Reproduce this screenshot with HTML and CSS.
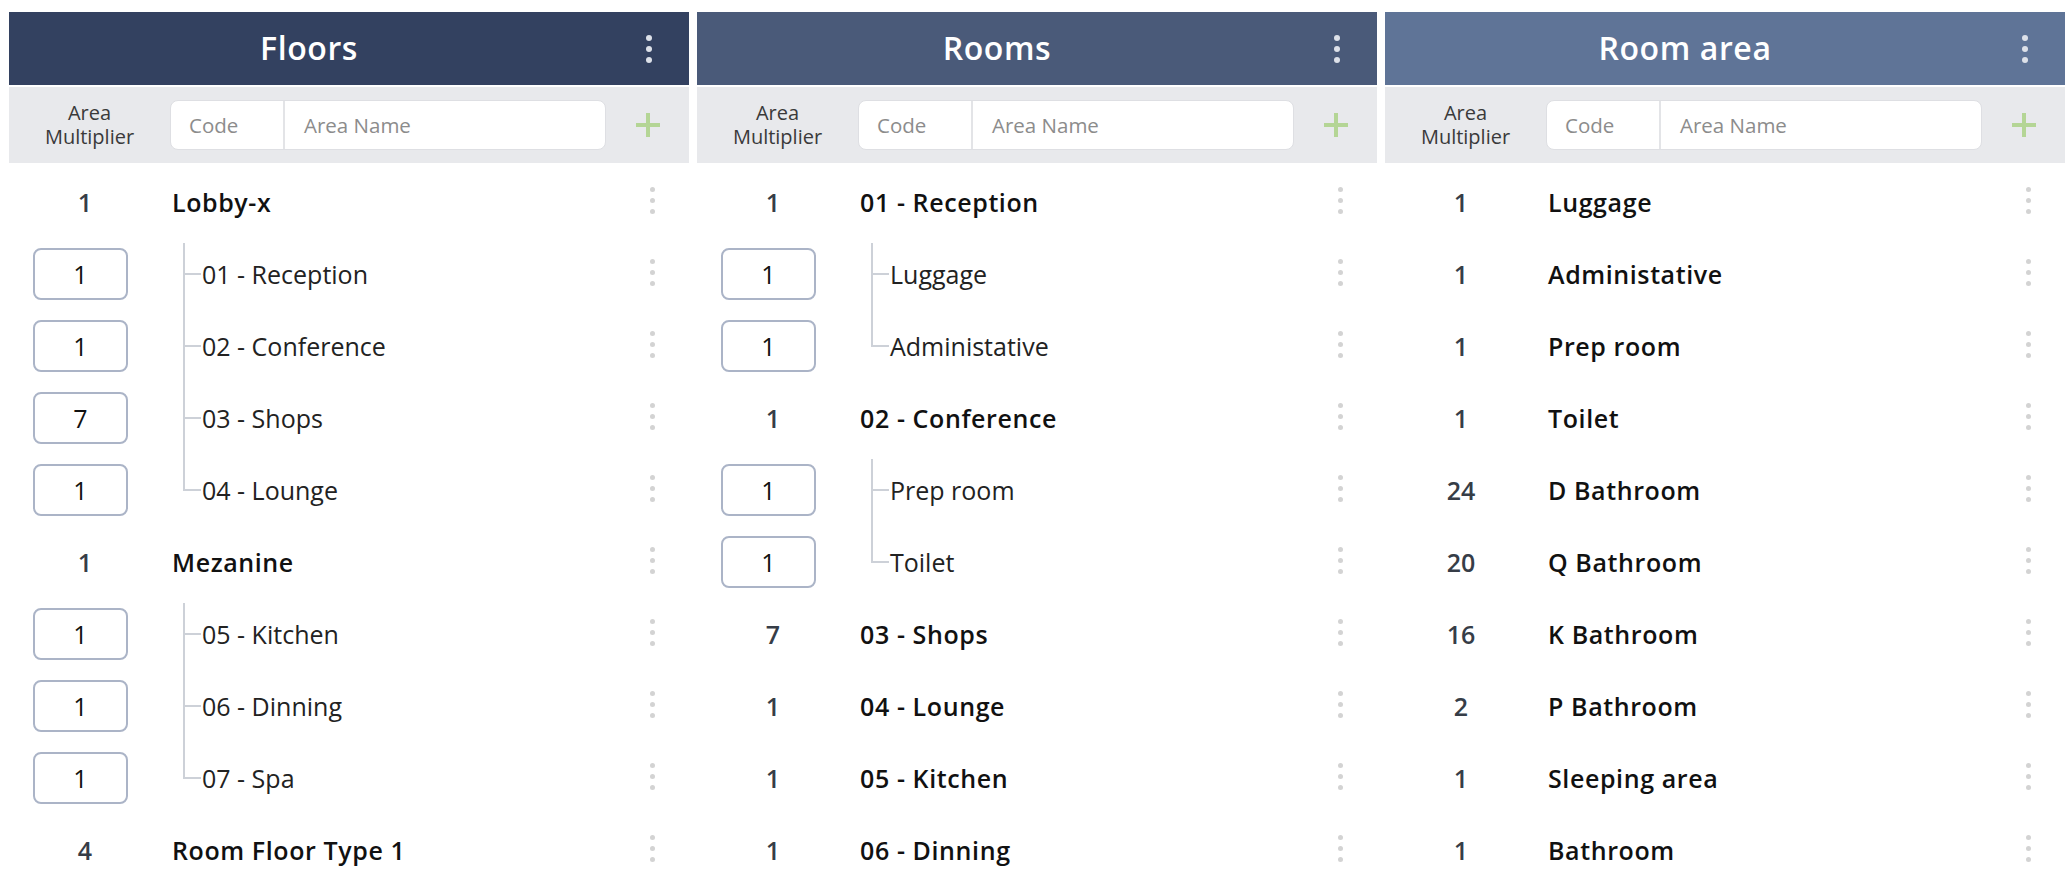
FILE: index.html
```html
<!DOCTYPE html>
<html lang="en">
<head>
<meta charset="utf-8">
<title>Areas</title>
<link rel="stylesheet" href="styles.css">
</head>
<body>
<div class="board">

  <section class="panel">
    <header class="head head-1">
      <h2>Floors</h2>
      <div class="menu"><i></i><i></i><i></i></div>
    </header>
    <div class="tools">
      <div class="label">Area<br>Multiplier</div>
      <div class="field"><span class="f-code">Code</span><span class="f-name">Area Name</span></div>
      <div class="add"><svg width="24" height="24" viewBox="0 0 24 24"><rect x="10" y="0" width="4" height="24" fill="#b4d595"/><rect x="0" y="10" width="24" height="4" fill="#b4d595"/></svg></div>
    </div>
    <div class="list">
      <div class="row"><div class="num">1</div><div class="title">Lobby-x</div><div class="more"><i></i><i></i><i></i></div></div>
      <div class="row sub first"><div class="qty">1</div><div class="title">01 - Reception</div><div class="more"><i></i><i></i><i></i></div></div>
      <div class="row sub"><div class="qty">1</div><div class="title">02 - Conference</div><div class="more"><i></i><i></i><i></i></div></div>
      <div class="row sub"><div class="qty">7</div><div class="title">03 - Shops</div><div class="more"><i></i><i></i><i></i></div></div>
      <div class="row sub last"><div class="qty">1</div><div class="title">04 - Lounge</div><div class="more"><i></i><i></i><i></i></div></div>
      <div class="row"><div class="num">1</div><div class="title">Mezanine</div><div class="more"><i></i><i></i><i></i></div></div>
      <div class="row sub first"><div class="qty">1</div><div class="title">05 - Kitchen</div><div class="more"><i></i><i></i><i></i></div></div>
      <div class="row sub"><div class="qty">1</div><div class="title">06 - Dinning</div><div class="more"><i></i><i></i><i></i></div></div>
      <div class="row sub last"><div class="qty">1</div><div class="title">07 - Spa</div><div class="more"><i></i><i></i><i></i></div></div>
      <div class="row"><div class="num">4</div><div class="title">Room Floor Type 1</div><div class="more"><i></i><i></i><i></i></div></div>
    </div>
  </section>

  <section class="panel">
    <header class="head head-2">
      <h2>Rooms</h2>
      <div class="menu"><i></i><i></i><i></i></div>
    </header>
    <div class="tools">
      <div class="label">Area<br>Multiplier</div>
      <div class="field"><span class="f-code">Code</span><span class="f-name">Area Name</span></div>
      <div class="add"><svg width="24" height="24" viewBox="0 0 24 24"><rect x="10" y="0" width="4" height="24" fill="#b4d595"/><rect x="0" y="10" width="24" height="4" fill="#b4d595"/></svg></div>
    </div>
    <div class="list">
      <div class="row"><div class="num">1</div><div class="title">01 - Reception</div><div class="more"><i></i><i></i><i></i></div></div>
      <div class="row sub first"><div class="qty">1</div><div class="title">Luggage</div><div class="more"><i></i><i></i><i></i></div></div>
      <div class="row sub last"><div class="qty">1</div><div class="title">Administative</div><div class="more"><i></i><i></i><i></i></div></div>
      <div class="row"><div class="num">1</div><div class="title">02 - Conference</div><div class="more"><i></i><i></i><i></i></div></div>
      <div class="row sub first"><div class="qty">1</div><div class="title">Prep room</div><div class="more"><i></i><i></i><i></i></div></div>
      <div class="row sub last"><div class="qty">1</div><div class="title">Toilet</div><div class="more"><i></i><i></i><i></i></div></div>
      <div class="row"><div class="num">7</div><div class="title">03 - Shops</div><div class="more"><i></i><i></i><i></i></div></div>
      <div class="row"><div class="num">1</div><div class="title">04 - Lounge</div><div class="more"><i></i><i></i><i></i></div></div>
      <div class="row"><div class="num">1</div><div class="title">05 - Kitchen</div><div class="more"><i></i><i></i><i></i></div></div>
      <div class="row"><div class="num">1</div><div class="title">06 - Dinning</div><div class="more"><i></i><i></i><i></i></div></div>
    </div>
  </section>

  <section class="panel">
    <header class="head head-3">
      <h2>Room area</h2>
      <div class="menu"><i></i><i></i><i></i></div>
    </header>
    <div class="tools">
      <div class="label">Area<br>Multiplier</div>
      <div class="field"><span class="f-code">Code</span><span class="f-name">Area Name</span></div>
      <div class="add"><svg width="24" height="24" viewBox="0 0 24 24"><rect x="10" y="0" width="4" height="24" fill="#b4d595"/><rect x="0" y="10" width="24" height="4" fill="#b4d595"/></svg></div>
    </div>
    <div class="list">
      <div class="row"><div class="num">1</div><div class="title">Luggage</div><div class="more"><i></i><i></i><i></i></div></div>
      <div class="row"><div class="num">1</div><div class="title">Administative</div><div class="more"><i></i><i></i><i></i></div></div>
      <div class="row"><div class="num">1</div><div class="title">Prep room</div><div class="more"><i></i><i></i><i></i></div></div>
      <div class="row"><div class="num">1</div><div class="title">Toilet</div><div class="more"><i></i><i></i><i></i></div></div>
      <div class="row"><div class="num">24</div><div class="title">D Bathroom</div><div class="more"><i></i><i></i><i></i></div></div>
      <div class="row"><div class="num">20</div><div class="title">Q Bathroom</div><div class="more"><i></i><i></i><i></i></div></div>
      <div class="row"><div class="num">16</div><div class="title">K Bathroom</div><div class="more"><i></i><i></i><i></i></div></div>
      <div class="row"><div class="num">2</div><div class="title">P Bathroom</div><div class="more"><i></i><i></i><i></i></div></div>
      <div class="row"><div class="num">1</div><div class="title">Sleeping area</div><div class="more"><i></i><i></i><i></i></div></div>
      <div class="row"><div class="num">1</div><div class="title">Bathroom</div><div class="more"><i></i><i></i><i></i></div></div>
    </div>
  </section>

</div>
</body>
</html>
```

FILE: styles.css
```css
html, body {
  margin: 0;
  padding: 0;
  background: #ffffff;
  overflow: hidden;
}

body {
  font-family: "Open Sans", "Noto Sans", sans-serif;
  color: #111;
}

.board {
  display: flex;
  gap: 8px;
  padding: 12px 5px 0 9px;
  height: 886px;
  box-sizing: border-box;
}

.panel {
  flex: 1 1 0;
  min-width: 0;
  display: flex;
  flex-direction: column;
}

.head {
  height: 77px;
  display: flex;
  align-items: center;
  color: #ffffff;
}

.head-1 { background: #334160; }
.head-2 { background: #4a5a79; }
.head-3 { background: #5f7497; }

.head h2 {
  flex: 1;
  margin: 0;
  text-align: center;
  font-size: 32px;
  font-weight: 600;
  letter-spacing: 0.6px;
  line-height: 1;
}

.menu {
  width: 80px;
  display: flex;
  flex-direction: column;
  align-items: center;
  gap: 5px;
  padding-top: 2px;
}

.menu i {
  display: block;
  width: 6px;
  height: 6px;
  border-radius: 50%;
  background: #dde1e9;
}

.tools {
  margin-top: 2px;
  height: 81px;
  background: #e8e9ec;
  display: grid;
  grid-template-columns: 161px 436px 1fr;
  align-items: center;
}

.label {
  text-align: center;
  font-size: 20px;
  line-height: 24px;
  color: #3a3a3a;
}

.field {
  height: 50px;
  display: flex;
  background: #ffffff;
  border: 1px solid #dedfe3;
  border-radius: 8px;
  box-sizing: border-box;
  font-size: 20.5px;
  color: #8c8c8c;
}

.f-code {
  width: 114px;
  box-sizing: border-box;
  padding-left: 18px;
  border-right: 2px solid #e3e4e7;
  display: flex;
  align-items: center;
}

.f-name {
  flex: 1;
  padding-left: 19px;
  display: flex;
  align-items: center;
}

.add {
  display: flex;
  justify-content: center;
  align-items: center;
}

.add svg {
  display: block;
}

.list {
  padding-top: 3px;
}

.row {
  position: relative;
  height: 72px;
  display: grid;
  grid-template-columns: 163px 1fr 74px;
  align-items: center;
}

.num {
  width: 152px;
  text-align: center;
  font-size: 25px;
  font-weight: 600;
  color: #363d47;
}

.qty {
  margin-left: 24px;
  width: 95px;
  height: 52px;
  box-sizing: border-box;
  border: 2px solid #abb4c7;
  border-radius: 8px;
  display: flex;
  align-items: center;
  justify-content: center;
  font-size: 25px;
  color: #111;
}

.title {
  font-size: 25px;
  font-weight: 600;
  letter-spacing: 0.6px;
  color: #111;
  white-space: nowrap;
}

.sub .title {
  font-size: 25px;
  font-weight: 400;
  letter-spacing: 0;
  padding-left: 30px;
  color: #222;
}

.sub::before {
  content: "";
  position: absolute;
  left: 174px;
  top: 0;
  bottom: 0;
  width: 2px;
  background: #cdd1d8;
}

.sub.first::before {
  top: 5px;
}

.sub.last::before {
  bottom: 35px;
}

.sub::after {
  content: "";
  position: absolute;
  left: 174px;
  top: 35px;
  width: 18px;
  height: 2px;
  background: #cdd1d8;
}

.more {
  display: flex;
  flex-direction: column;
  align-items: center;
  gap: 6px;
  padding-bottom: 4px;
}

.more i {
  display: block;
  width: 5px;
  height: 5px;
  border-radius: 50%;
  background: #d3d3d3;
}
```
